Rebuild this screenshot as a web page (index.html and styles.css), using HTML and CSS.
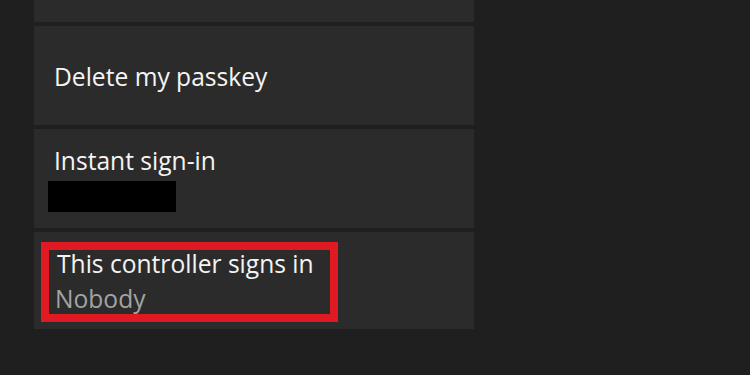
FILE: index.html
```html
<!DOCTYPE html>
<html>
<head>
<meta charset="utf-8">
<link rel="stylesheet" href="styles.css">
</head>
<body>
<div class="panel">
  <div class="tile tile-cut"></div>
  <div class="tile tile-single">
    <div class="label">Delete my passkey</div>
  </div>
  <div class="tile tile-instant">
    <div class="label">Instant sign-in</div>
    <div class="redacted"></div>
  </div>
  <div class="tile tile-controller">
    <div class="highlight">
      <div class="label label-first">This controller signs in</div>
      <div class="value">Nobody</div>
    </div>
  </div>
</div>
</body>
</html>
```
FILE: styles.css
```css
html, body {
  margin: 0;
  padding: 0;
  width: 750px;
  height: 375px;
  overflow: hidden;
  background: #1f1f1f;
  font-family: "Open Sans", "Noto Sans", sans-serif;
}
.panel {
  display: flex;
  flex-direction: column;
  gap: 4px;
  margin-left: 34px;
  width: 440px;
}
.tile {
  background: #2b2b2b;
  height: 99px;
  box-sizing: border-box;
  padding-left: 20px;
}
.tile-cut {
  height: 22px;
}
.label {
  color: #f4f4f4;
  font-size: 24.6px;
  line-height: 30px;
  white-space: nowrap;
}
.tile-single {
  padding-top: 36px;
}
.tile-instant {
  padding-top: 17px;
}
.redacted {
  margin-top: 5px;
  margin-left: -6px;
  width: 128px;
  height: 31px;
  background: #000;
}
.tile-controller {
  padding-left: 7px;
  padding-top: 10px;
  height: 97px;
}
.highlight {
  width: 275px;
  border: 8px solid #e01a22;
  padding-left: 6px;
  box-sizing: content-box;
  height: 64px;
  overflow: hidden;
}
.label-first {
  margin-left: 2px;
  margin-top: -1px;
}
.value {
  color: #a3a3a3;
  font-size: 24.6px;
  line-height: 30px;
  margin-top: 5px;
}
```
